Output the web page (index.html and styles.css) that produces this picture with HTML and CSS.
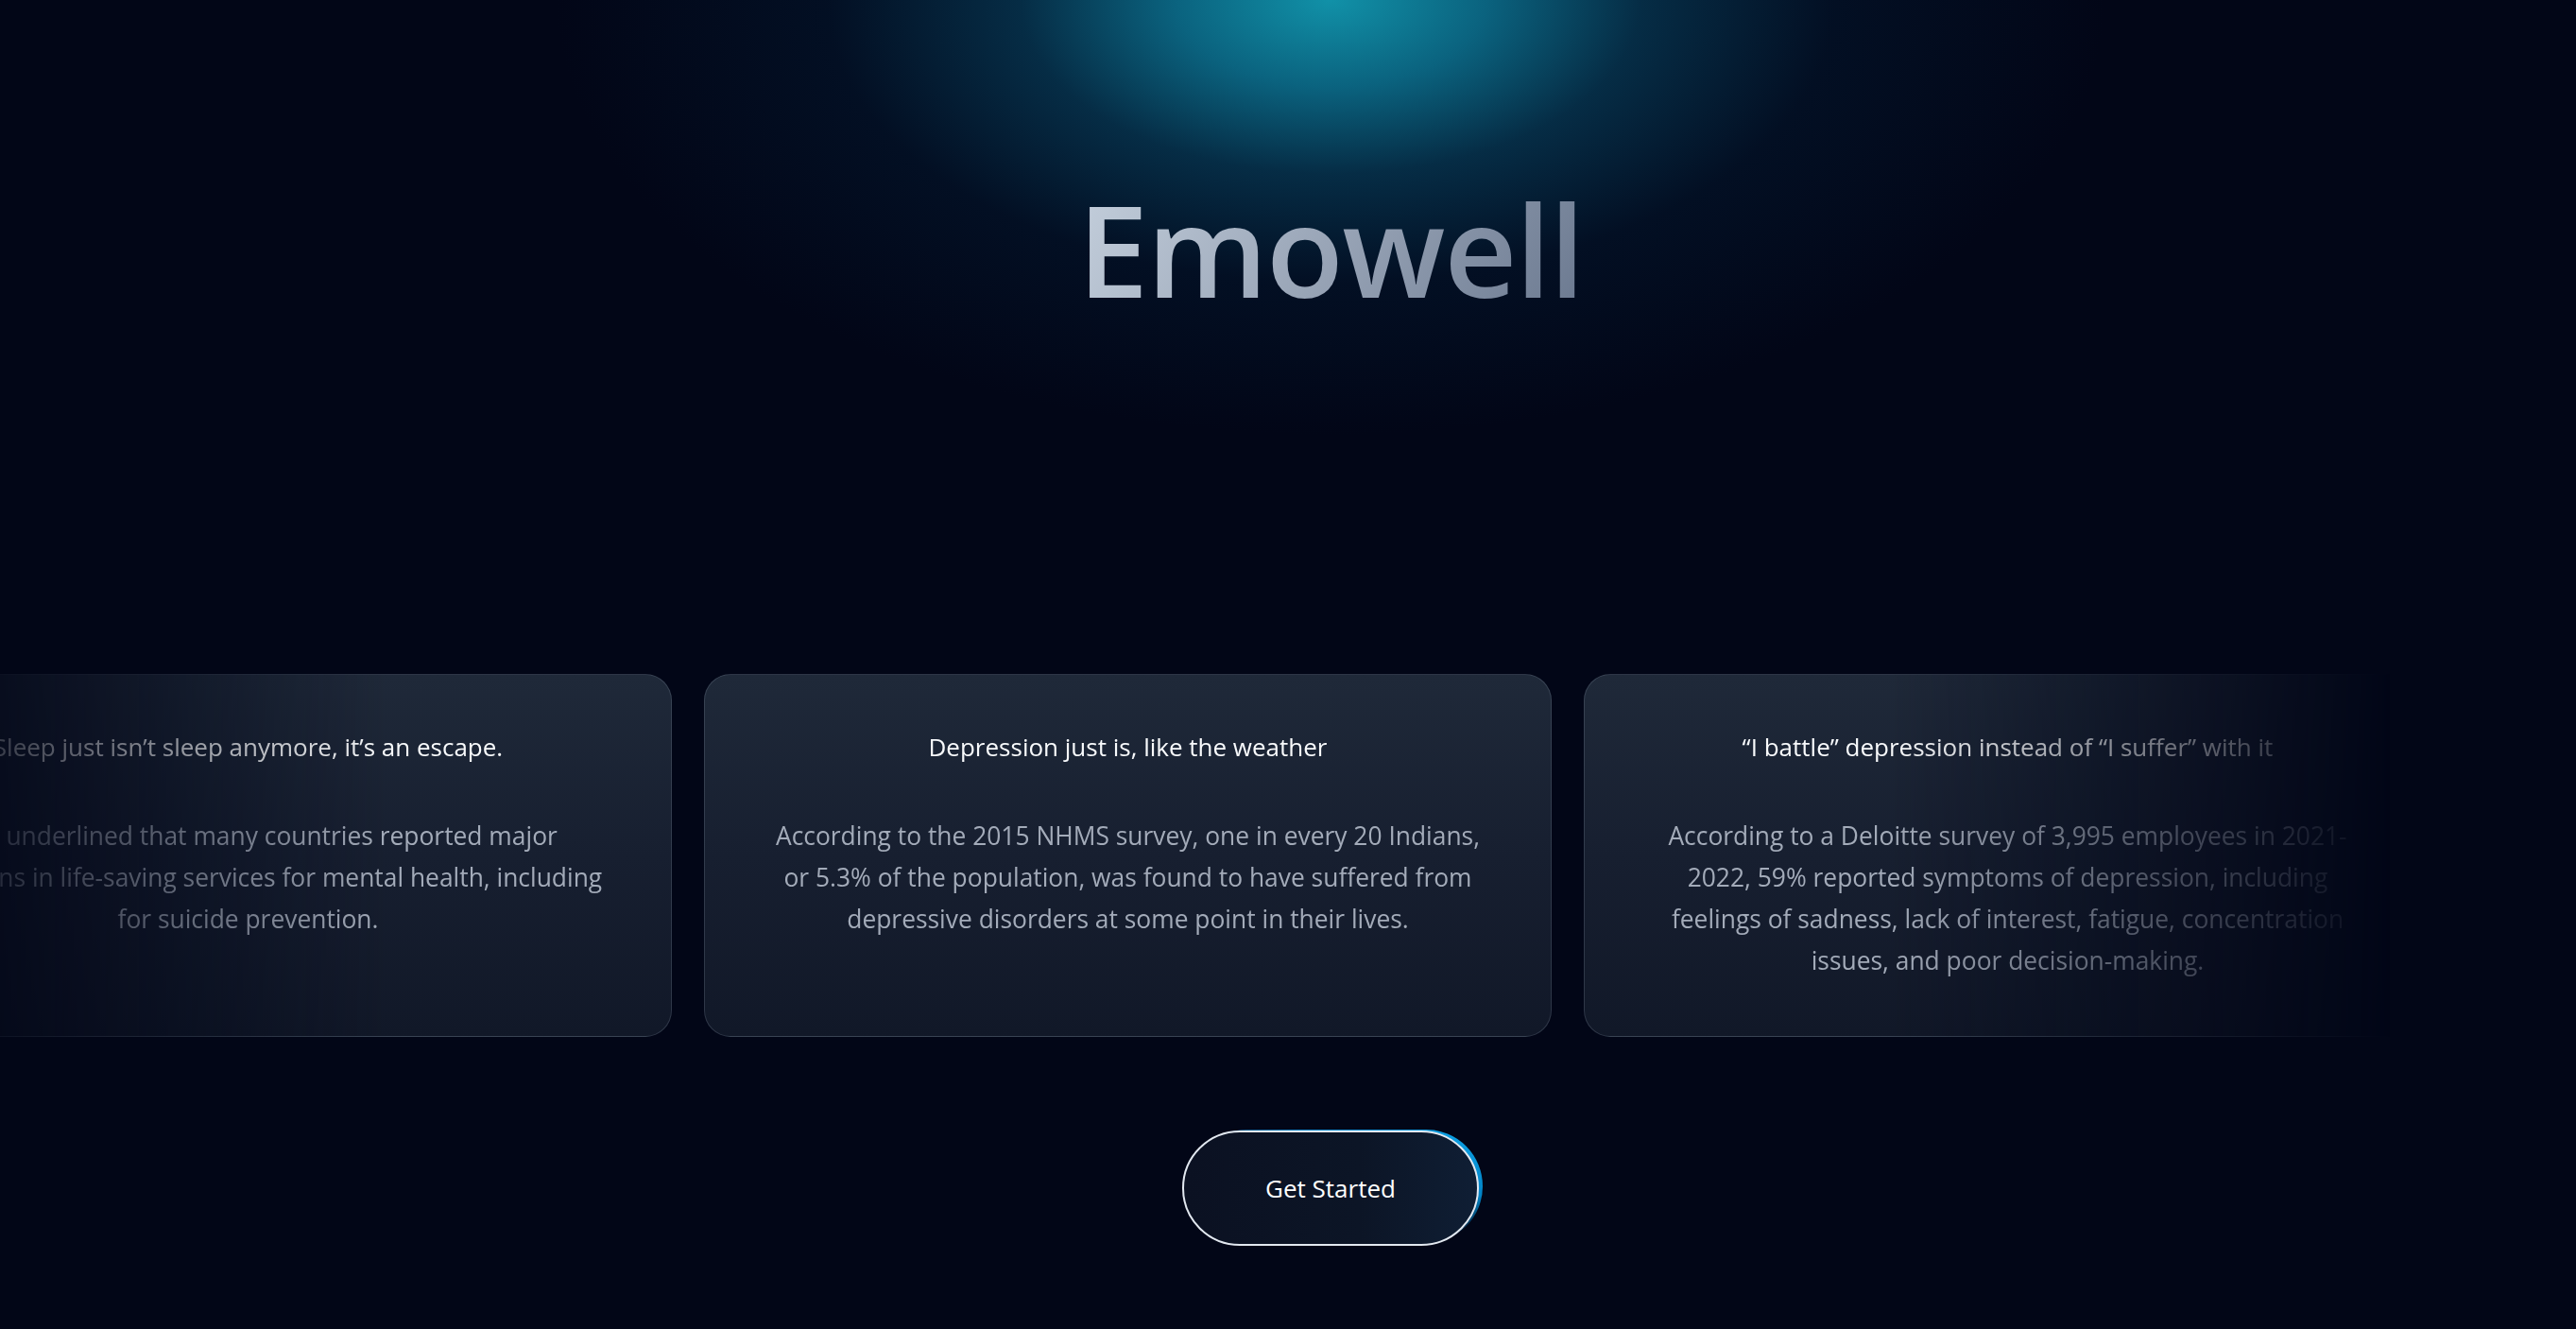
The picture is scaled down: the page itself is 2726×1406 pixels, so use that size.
FILE: index.html
```html
<!DOCTYPE html>
<html lang="en">
<head>
<meta charset="utf-8">
<title>Emowell</title>
<link rel="stylesheet" href="styles.css">
</head>
<body>
<main class="page">
  <h1 class="brand">Emowell</h1>

  <section class="carousel">
    <div class="track">
      <article class="card">
        <h3 class="card-title">Sleep just isn’t sleep anymore, it’s an escape.</h3>
        <p class="card-text">WHO underlined that many countries reported major disruptions in life-saving services for mental health, including for suicide prevention.</p>
      </article>
      <article class="card">
        <h3 class="card-title">Depression just is, like the weather</h3>
        <p class="card-text">According to the 2015 NHMS survey, one in every 20 Indians, or 5.3% of the population, was found to have suffered from depressive disorders at some point in their lives.</p>
      </article>
      <article class="card">
        <h3 class="card-title">“I battle” depression instead of “I suffer” with it</h3>
        <p class="card-text">According to a Deloitte survey of 3,995 employees in 2021-2022, 59% reported symptoms of depression, including feelings of sadness, lack of interest, fatigue, concentration issues, and poor decision-making.</p>
      </article>
    </div>
  </section>

  <button class="cta" type="button"><span>Get Started</span></button>
</main>
</body>
</html>
```

FILE: styles.css
```css
* { box-sizing: border-box; }

html, body {
  margin: 0;
  padding: 0;
}

body {
  width: 2726px;
  height: 1406px;
  overflow: hidden;
  font-family: "Open Sans", "Noto Sans", "Liberation Sans", sans-serif;
  background:
    radial-gradient(ellipse 820px 460px at 1408px 0, rgba(17,145,168,1) 0%, rgba(12,115,145,0.85) 20%, rgba(8,70,100,0.6) 40%, rgba(4,32,58,0.35) 65%, rgba(2,6,23,0) 100%),
    #020617;
  color: #e2e8f0;
}

.page {
  display: flex;
  flex-direction: column;
  align-items: center;
  padding-left: 90px;
  padding-top: 196px;
}

.brand {
  margin: 0;
  font-size: 134px;
  font-weight: 560;
  line-height: 1;
  letter-spacing: -1.5px;
  background: linear-gradient(120deg, #c4cfdc 0%, #98a4b6 50%, #6b7990 100%);
  -webkit-background-clip: text;
  background-clip: text;
  color: transparent;
}

.carousel {
  align-self: flex-start;
  margin-left: -210px;
  margin-top: 383px;
  width: 2650px;
  -webkit-mask-image: linear-gradient(to right, rgba(0,0,0,0) 0%, #000 20%, #000 80%, rgba(0,0,0,0) 100%);
  mask-image: linear-gradient(to right, rgba(0,0,0,0) 0%, #000 20%, #000 80%, rgba(0,0,0,0) 100%);
}

.track {
  display: flex;
  gap: 34px;
  transform: translateX(-66px);
}

.card {
  flex: 0 0 897px;
  height: 384px;
  padding: 56px 66px 0;
  border: 1px solid rgba(148,163,184,0.22);
  border-radius: 28px;
  background: linear-gradient(180deg, #1f2939 0%, #171f30 50%, #111828 100%);
  text-align: center;
}

.card-title {
  margin: 0;
  font-size: 26px;
  font-weight: 400;
  line-height: 40px;
  color: #f8fafc;
}

.card-text {
  margin: 52px 0 0;
  font-size: 26.4px;
  font-weight: 400;
  line-height: 44px;
  color: #a3abb9;
}

.cta {
  position: relative;
  margin-top: 99px;
  width: 314px;
  height: 122px;
  border: 2px solid #e2e8f0;
  border-radius: 999px;
  background: linear-gradient(90deg, #0b1122 0%, #0c1526 60%, #0f1e34 100%);
  color: #ffffff;
  font-family: inherit;
  font-size: 26px;
  font-weight: 400;
  cursor: pointer;
}

.cta::before {
  content: "";
  position: absolute;
  top: -3px;
  right: -6px;
  width: 100%;
  height: calc(100% + 2px);
  border-radius: 999px;
  background: linear-gradient(200deg, #0ea5e9 0%, #0284c7 30%, rgba(2,132,199,0) 55%);
  z-index: -1;
}

.cta span {
  position: relative;
}
```
